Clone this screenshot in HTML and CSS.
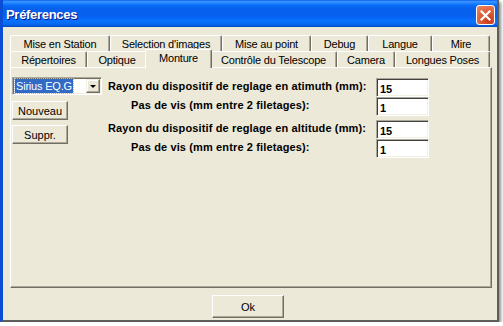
FILE: index.html
```html
<!DOCTYPE html>
<html>
<head>
  <link rel="stylesheet" href="styles.css">
</head>
<body>
  <div class="window">
    <div class="titlebar">
      <span class="title">Préferences</span>
      <button class="close-btn">
        <svg width="11" height="11" viewBox="0 0 11 11">
          <path d="M1.5 1.5 L9.5 9.5 M9.5 1.5 L1.5 9.5" stroke="#fff" stroke-width="2.2" stroke-linecap="square"/>
        </svg>
      </button>
    </div>
    <div class="client">
      <div class="tabs">
        <div class="tab-row">
          <div class="tab tab-station">Mise en Station</div>
          <div class="tab tab-images">Selection d'images</div>
          <div class="tab tab-focus">Mise au point</div>
          <div class="tab tab-debug">Debug</div>
          <div class="tab tab-lang">Langue</div>
          <div class="tab tab-mire">Mire</div>
        </div>
        <div class="tab-row">
          <div class="tab tab-dirs">Répertoires</div>
          <div class="tab tab-optics">Optique</div>
          <div class="tab tab-mount selected">Monture</div>
          <div class="tab tab-scope">Contrôle du Telescope</div>
          <div class="tab tab-camera">Camera</div>
          <div class="tab tab-poses">Longues Poses</div>
        </div>
      </div>
      <div class="panel">
        <div class="side">
          <div class="combo">
            <span class="combo-value"><span class="selection">Sirius EQ.G</span></span>
            <span class="combo-btn"><span class="arrow"></span></span>
          </div>
          <button class="btn side-btn">Nouveau</button>
          <button class="btn side-btn">Suppr.</button>
        </div>
        <div class="fields">
          <div class="group">
            <div class="field">
              <label class="field-label">Rayon du dispositif de reglage en atimuth (mm):</label>
              <input class="num" type="text" value="15">
            </div>
            <div class="field">
              <label class="field-label indent">Pas de vis (mm entre 2 filetages):</label>
              <input class="num" type="text" value="1">
            </div>
          </div>
          <div class="group">
            <div class="field">
              <label class="field-label">Rayon du dispositif de reglage en altitude (mm):</label>
              <input class="num" type="text" value="15">
            </div>
            <div class="field">
              <label class="field-label indent">Pas de vis (mm entre 2 filetages):</label>
              <input class="num" type="text" value="1">
            </div>
          </div>
        </div>
      </div>
      <div class="footer">
        <button class="btn ok-btn">Ok</button>
      </div>
    </div>
  </div>
</body>
</html>
```

FILE: styles.css
```css
body {
  margin: 0;
  background: #fff;
  font-family: "Liberation Sans", Arial, sans-serif;
  font-size: 11px;
  color: #000;
}
.window {
  box-sizing: border-box;
  width: 499px;
  height: 322px;
  background: #ECE9D8;
  border-left: 3px solid #0A4ED6;
  border-right: 2px solid #5E5D58;
  border-bottom: 2px solid #5E5D58;
  box-shadow: 2px 2px 3px rgba(0, 0, 0, 0.45);
  display: flex;
  flex-direction: column;
}
.titlebar {
  height: 27px;
  flex-shrink: 0;
  display: flex;
  align-items: center;
  justify-content: space-between;
  padding: 0 0 0 3px;
  background: linear-gradient(to bottom, #0A5FF0 0%, #3D95FF 6%, #1E84FF 12%, #0A6CF5 20%, #0761EC 30%, #0660EE 56%, #0766F7 66%, #0A72FE 78%, #076AF2 88%, #055BDD 95%, #0448B8 100%);
}
.title {
  color: #fff;
  font-size: 13px;
  font-weight: bold;
  letter-spacing: -0.3px;
  text-shadow: 1px 1px 0 #0A1883;
  margin-top: 2px;
}
.close-btn {
  width: 19px;
  height: 20px;
  margin: 3px 2px 0 0;
  padding: 0;
  border: 1px solid #fff;
  border-radius: 3px;
  background: radial-gradient(circle at 70% 80%, #C7391B 0%, #E0643E 55%, #EE8B6A 100%);
  display: flex;
  align-items: center;
  justify-content: center;
}
.client {
  flex: 1;
  padding: 8px 5px 0 7px;
}
.tab-row {
  display: flex;
  height: 16px;
}
.tab {
  box-sizing: border-box;
  height: 16px;
  display: flex;
  align-items: center;
  justify-content: center;
  border-top: 1px solid #fff;
  border-left: 1px solid #fff;
  border-right: 1px solid #716F64;
  box-shadow: inset -1px 0 0 #ACA899;
  border-radius: 2px 2px 0 0;
  white-space: nowrap;
  letter-spacing: -0.2px;
  padding-top: 1px;
}
.tab-station { width: 100px; }
.tab-images { width: 112px; }
.tab-focus { width: 89px; }
.tab-debug { width: 57px; }
.tab-lang { width: 64px; }
.tab-mire { width: 58px; }
.tab-dirs { width: 77px; }
.tab-optics { width: 60px; }
.tab-mount { width: 63px; }
.tab-scope { width: 127px; }
.tab-camera { width: 58px; }
.tab-poses { width: 95px; }
.tab.selected {
  position: relative;
  z-index: 1;
  width: 67px;
  height: 19px;
  margin: -2px -2px -1px -2px;
  padding-bottom: 3px;
  background: #ECE9D8;
}
.panel {
  box-sizing: border-box;
  height: 221px;
  border-top: 1px solid #fff;
  border-left: 1px solid #fff;
  border-right: 1px solid #716F64;
  border-bottom: 1px solid #716F64;
  box-shadow: inset -1px -1px 0 #ACA899;
  padding: 9px 0 0 1px;
  display: flex;
  gap: 6px;
}
.side {
  width: 90px;
  display: flex;
  flex-direction: column;
  align-items: flex-start;
}
.combo {
  box-sizing: border-box;
  width: 90px;
  height: 18px;
  display: flex;
  background: #fff;
  border-top: 1px solid #ACA899;
  border-left: 1px solid #ACA899;
  border-right: 1px solid #fff;
  border-bottom: 1px solid #fff;
  box-shadow: inset 1px 1px 0 #716F64, inset -1px -1px 0 #F1EFE2;
  padding: 1px;
}
.combo-value {
  flex: 1;
  display: flex;
  align-items: center;
  padding-left: 1px;
}
.selection {
  background: #316AC5;
  color: #fff;
  outline: 1px dotted #A7B9E0;
  padding: 1px 1px;
  line-height: 12px;
  letter-spacing: -0.2px;
}
.combo-btn {
  box-sizing: border-box;
  width: 14px;
  background: #ECE9D8;
  border-top: 1px solid #F1EFE2;
  border-left: 1px solid #F1EFE2;
  border-right: 1px solid #716F64;
  border-bottom: 1px solid #716F64;
  box-shadow: inset -1px -1px 0 #ACA899, inset 1px 1px 0 #fff;
  display: flex;
  align-items: center;
  justify-content: center;
}
.arrow {
  width: 0;
  height: 0;
  border-left: 3px solid transparent;
  border-right: 3px solid transparent;
  border-top: 3px solid #000;
  margin-top: 1px;
}
.btn {
  box-sizing: border-box;
  font-family: "Liberation Sans", Arial, sans-serif;
  font-size: 11px;
  color: #000;
  background: #ECE9D8;
  border-top: 1px solid #fff;
  border-left: 1px solid #fff;
  border-right: 1px solid #716F64;
  border-bottom: 1px solid #716F64;
  box-shadow: inset -1px -1px 0 #ACA899;
  border-radius: 0;
  padding: 0;
}
.side-btn {
  width: 56px;
  height: 19px;
  margin-top: 6px;
}
.side-btn + .side-btn {
  margin-top: 5px;
}
.fields {
  margin-top: 1px;
  display: flex;
  flex-direction: column;
  gap: 4px;
}
.field {
  display: flex;
  align-items: center;
  height: 19px;
}
.field-label {
  width: 268px;
  font-weight: bold;
  letter-spacing: 0.13px;
  padding-bottom: 3px;
  white-space: nowrap;
}
.field-label.indent {
  box-sizing: border-box;
  padding-left: 23px;
}
.num {
  box-sizing: border-box;
  width: 53px;
  height: 19px;
  margin: 0;
  padding: 2px 0 0 3px;
  font-family: "Liberation Sans", Arial, sans-serif;
  font-size: 11px;
  font-weight: bold;
  color: #000;
  background: #fff;
  border-top: 1px solid #ACA899;
  border-left: 1px solid #ACA899;
  border-right: 1px solid #fff;
  border-bottom: 1px solid #fff;
  box-shadow: inset 1px 1px 0 #404040, inset -1px -1px 0 #F1EFE2;
  outline: none;
}
.footer {
  padding: 7px 0 0 202px;
}
.ok-btn {
  width: 72px;
  height: 23px;
}
```
